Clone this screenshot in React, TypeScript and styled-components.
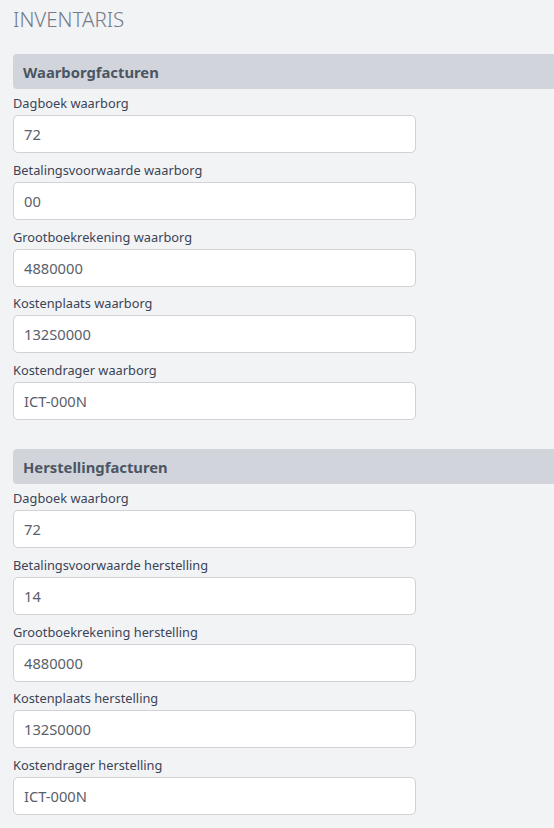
import React from "react";
import styled, { createGlobalStyle } from "styled-components";

const Global = createGlobalStyle`
  html, body { margin: 0; padding: 0; background: #f2f3f5; }
  body { font-family: "Noto Sans", "Open Sans", sans-serif; }
`;

const Page = styled.div`
  padding: 6px 0 20px 13px;
  overflow: hidden;
`;

const Title = styled.h1`
  margin: 0 0 22px 0;
  font-family: "Noto Sans Light", "Noto Sans", sans-serif;
  font-size: 20.5px;
  font-weight: 300;
  color: #737b8a;
  line-height: 26px;
`;

const Section = styled.section`
  display: flex;
  flex-direction: column;
  margin-bottom: 21.25px;
`;

const SectionHeader = styled.div`
  height: 35px;
  background: #d1d5db;
  border-radius: 4px 0 0 4px;
  margin-right: -10px;
  display: flex;
  align-items: center;
  padding-left: 10px;
  font-size: 14.8px;
  font-weight: 700;
  color: #4b5563;
  margin-bottom: 5px;
`;

const Field = styled.div`
  display: flex;
  flex-direction: column;
  margin-bottom: 7.75px;
`;

const Label = styled.label`
  font-size: 12.8px;
  line-height: 18px;
  color: #3b4456;
  margin-bottom: 3px;
`;

const Input = styled.input`
  box-sizing: border-box;
  width: 403px;
  height: 38px;
  border: 1px solid #d1d1d6;
  border-radius: 5px;
  background: #fff;
  padding: 0 10px;
  font-family: "Noto Sans", sans-serif;
  font-size: 14.7px;
  color: #5a606b;
  outline: none;
`;

type F = { label: string; value: string };

const sections: { title: string; fields: F[] }[] = [
  {
    title: "Waarborgfacturen",
    fields: [
      { label: "Dagboek waarborg", value: "72" },
      { label: "Betalingsvoorwaarde waarborg", value: "00" },
      { label: "Grootboekrekening waarborg", value: "4880000" },
      { label: "Kostenplaats waarborg", value: "132S0000" },
      { label: "Kostendrager waarborg", value: "ICT-000N" },
    ],
  },
  {
    title: "Herstellingfacturen",
    fields: [
      { label: "Dagboek waarborg", value: "72" },
      { label: "Betalingsvoorwaarde herstelling", value: "14" },
      { label: "Grootboekrekening herstelling", value: "4880000" },
      { label: "Kostenplaats herstelling", value: "132S0000" },
      { label: "Kostendrager herstelling", value: "ICT-000N" },
    ],
  },
];

export default function App() {
  return (
    <>
      <Global />
      <Page>
        <Title>INVENTARIS</Title>
        {sections.map((s) => (
          <Section key={s.title}>
            <SectionHeader>{s.title}</SectionHeader>
            {s.fields.map((f, i) => (
              <Field key={i}>
                <Label>{f.label}</Label>
                <Input defaultValue={f.value} readOnly />
              </Field>
            ))}
          </Section>
        ))}
      </Page>
    </>
  );
}
